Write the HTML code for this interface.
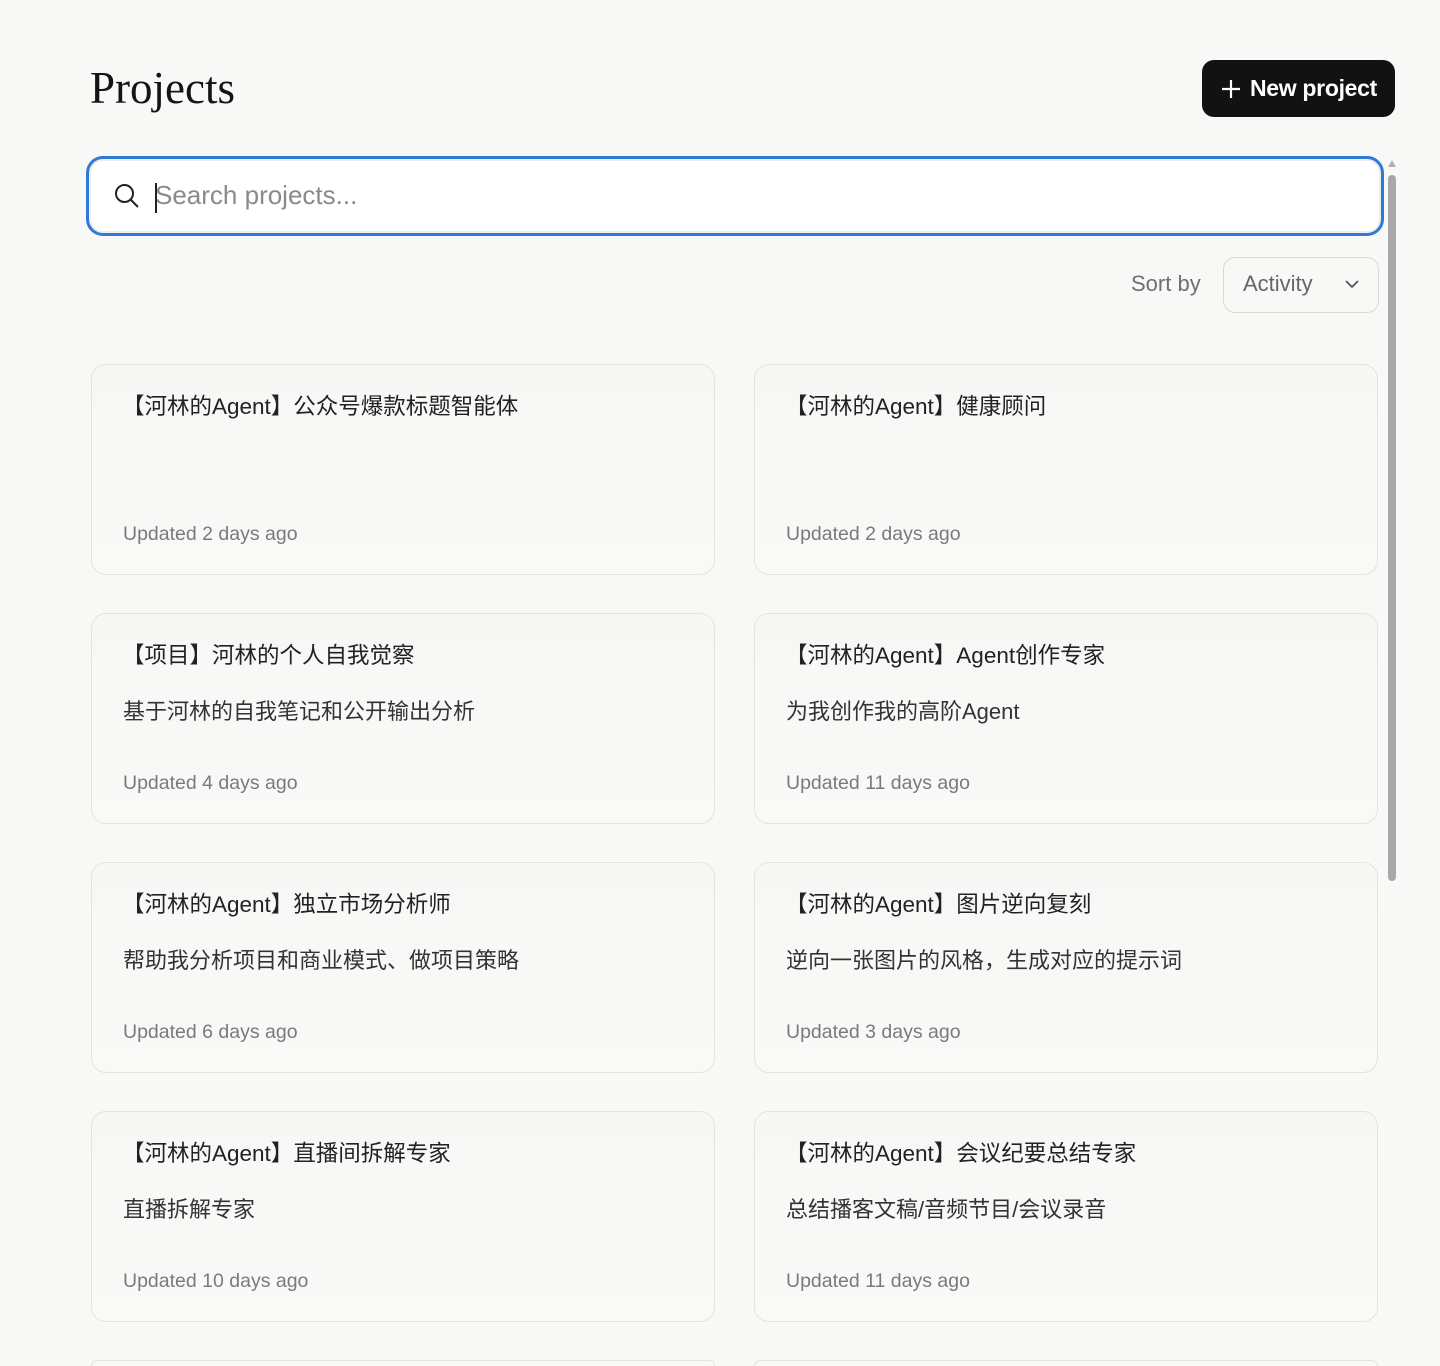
<!DOCTYPE html>
<html style="height:1366px;overflow:hidden"><head><meta charset="utf-8"><style>
*{box-sizing:border-box;margin:0;padding:0}
html,body{width:1440px;height:1366px;overflow:hidden}
body{background:#f8f8f6;font-family:"Liberation Sans","Noto Sans CJK SC",sans-serif;position:relative;color:#1a1a1a}
h1{position:absolute;left:90px;top:62px;font-family:"Liberation Serif","Noto Serif CJK SC",serif;font-weight:400;font-size:45px;letter-spacing:0;color:#141414}
.btn{position:absolute;left:1202px;top:60px;width:193px;height:57px;background:#121212;border-radius:12px;color:#fff;font-size:23px;font-weight:700;display:flex;align-items:center;justify-content:center;gap:8px;letter-spacing:-0.3px}
.search{position:absolute;left:86px;top:156px;width:1298px;height:80px;border:3px solid #3079d6;border-radius:17px;background:#fff;box-shadow:inset 0 0 0 2px #eee}
.search span{position:absolute;left:66px;top:21px;font-size:26px;color:#8a8a8a}
.cur{position:absolute;left:66px;top:24px;width:2px;height:30px;background:#222}
.sb{position:absolute;left:1388px;top:175px;width:8px;height:706px;background:#a8a8a8;border-radius:4px}
.sbt{position:absolute;left:1388px;top:160px;width:0;height:0;border-left:4px solid transparent;border-right:4px solid transparent;border-bottom:7px solid #b0b0b0}
.sortl{position:absolute;left:1131px;top:271px;font-size:22px;color:#6f6f6f}
.sel{position:absolute;left:1223px;top:257px;width:156px;height:56px;border:1px solid #d8d8d4;border-radius:12px;font-size:22px;color:#666;padding:13px 0 0 19px}
.sel svg{position:absolute;right:18px;top:21px}
.card{position:absolute;width:624px;height:211px;border:1px solid #e3e3e0;border-radius:15px;background:linear-gradient(#f7f7f5,#f9f9f7)}
.card .t{position:absolute;left:30px;top:24px;font-size:22.5px;color:#222;white-space:nowrap}
.card .d{position:absolute;left:31px;top:80px;font-size:22px;color:#333;white-space:nowrap}
.card .u{position:absolute;left:31px;top:158px;font-size:19.5px;color:#7a7a7a}
</style></head><body>
<h1>Projects</h1>
<div class="btn"><svg width="22" height="22" viewBox="0 0 22 22"><path d="M11 2v18M2 11h18" stroke="#fff" stroke-width="2.2"/></svg>New project</div>
<div class="search"><svg style="position:absolute;left:24px;top:23px" width="28" height="28" viewBox="0 0 28 28"><circle cx="11.5" cy="11.5" r="8.5" fill="none" stroke="#222" stroke-width="2"/><path d="M18 18l7 7" stroke="#222" stroke-width="2"/></svg><span>Search projects...</span><div class="cur"></div></div>
<div class="sbt"></div><div class="sb"></div>
<div class="sortl">Sort by</div>
<div class="sel">Activity<svg width="16" height="10" viewBox="0 0 16 10"><path d="M2 2l6 6 6-6" fill="none" stroke="#555" stroke-width="1.8"/></svg></div>

<div class="card" style="left:91px;top:364px"><div class="t">【河林的Agent】公众号爆款标题智能体</div><div class="u">Updated 2 days ago</div></div>
<div class="card" style="left:754px;top:364px"><div class="t">【河林的Agent】健康顾问</div><div class="u">Updated 2 days ago</div></div>
<div class="card" style="left:91px;top:613px"><div class="t">【项目】河林的个人自我觉察</div><div class="d">基于河林的自我笔记和公开输出分析</div><div class="u">Updated 4 days ago</div></div>
<div class="card" style="left:754px;top:613px"><div class="t">【河林的Agent】Agent创作专家</div><div class="d">为我创作我的高阶Agent</div><div class="u">Updated 11 days ago</div></div>
<div class="card" style="left:91px;top:862px"><div class="t">【河林的Agent】独立市场分析师</div><div class="d">帮助我分析项目和商业模式、做项目策略</div><div class="u">Updated 6 days ago</div></div>
<div class="card" style="left:754px;top:862px"><div class="t">【河林的Agent】图片逆向复刻</div><div class="d">逆向一张图片的风格，生成对应的提示词</div><div class="u">Updated 3 days ago</div></div>
<div class="card" style="left:91px;top:1111px"><div class="t">【河林的Agent】直播间拆解专家</div><div class="d">直播拆解专家</div><div class="u">Updated 10 days ago</div></div>
<div class="card" style="left:754px;top:1111px"><div class="t">【河林的Agent】会议纪要总结专家</div><div class="d">总结播客文稿/音频节目/会议录音</div><div class="u">Updated 11 days ago</div></div>
<div class="card" style="left:91px;top:1360px;height:6px;border-bottom:none;border-radius:15px 15px 0 0"></div>
<div class="card" style="left:754px;top:1360px;height:6px;border-bottom:none;border-radius:15px 15px 0 0"></div>
</body></html>
